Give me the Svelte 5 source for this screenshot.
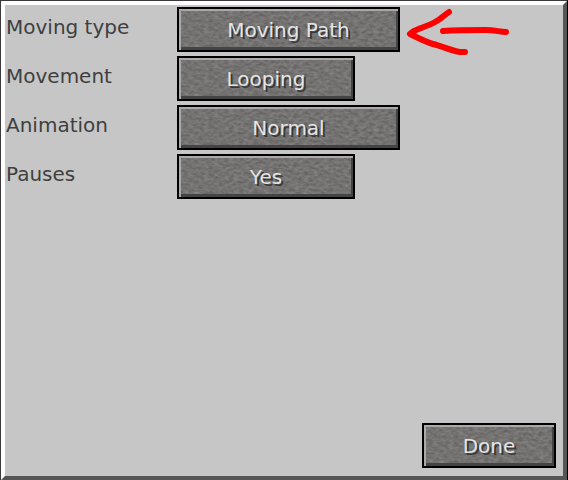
<script lang="ts">
  type Setting = {
    id: string;
    label: string;
    options: string[];
    wide: boolean;
    marked?: boolean;
  };

  const settings: Setting[] = [
    { id: 'moving-type', label: 'Moving type', options: ['Moving Path', 'Standing', 'Wandering'], wide: true, marked: true },
    { id: 'movement', label: 'Movement', options: ['Looping', 'Backtracking'], wide: false },
    { id: 'animation', label: 'Animation', options: ['Normal', 'Sneaking'], wide: true },
    { id: 'pauses', label: 'Pauses', options: ['Yes', 'No'], wide: false },
  ];

  let chosen = $state(settings.map(() => 0));
  let open = $state(true);

  function cycle(i: number) {
    chosen[i] = (chosen[i] + 1) % settings[i].options.length;
  }
</script>

{#if open}
  <main class="window">
    <div class="panel">
      <div class="settings">
        {#each settings as s, i (s.id)}
          <div class="row">
            <label for={s.id}>{s.label}</label>
            <button id={s.id} class="stone" class:wide={s.wide} type="button" onclick={() => cycle(i)}>
              {s.options[chosen[i]]}
            </button>
            {#if s.marked}
              <svg class="arrow" viewBox="0 0 104 46" aria-hidden="true">
                <path d="M45 5 C40 8 36 13 31 15 C24 19 16 21 10 24 L6 27 C14 31 22 35 29 37 C38 39 47 44 56 45 L61 45" />
                <path d="M39 24 C54 23 71 23 82 23 C91 23 96 25 102 25" />
              </svg>
            {/if}
          </div>
        {/each}
      </div>
      <button class="stone done" type="button" onclick={() => (open = false)}>Done</button>
    </div>
  </main>
{/if}

<style>
  :global(body) {
    margin: 0;
    background: #c6c6c6;
  }
  .window {
    box-sizing: border-box;
    display: flex;
    min-height: 100vh;
    border: 1px solid #3b393c;
    border-right-color: #000;
    border-bottom: 0;
    font-family: 'DejaVu Sans', sans-serif;
    font-size: 20px;
    line-height: 24px;
  }
  .panel {
    flex: 1;
    display: flex;
    flex-direction: column;
    border: 4px solid;
    border-color: #fff #555 #555 #fff;
    border-top-left-radius: 2px;
    background: #c6c6c6;
    padding: 2px 7px 8px 1px;
  }
  .settings {
    display: flex;
    flex-direction: column;
    gap: 4px;
  }
  .row {
    display: flex;
    align-items: flex-start;
  }
  label {
    flex: 0 0 171px;
    padding-top: 8px;
    color: #3f3f3f;
    white-space: nowrap;
  }
  .stone {
    box-sizing: border-box;
    flex-shrink: 0;
    width: 178px;
    height: 45px;
    margin: 0;
    padding: 0;
    border: 2px solid #000;
    border-radius: 0;
    background-color: #737070;
    background-image: url("data:image/svg+xml,%3Csvg xmlns='http://www.w3.org/2000/svg' width='240' height='48'%3E%3Cfilter id='n' x='0' y='0' width='100%25' height='100%25' color-interpolation-filters='sRGB'%3E%3CfeTurbulence type='fractalNoise' baseFrequency='.2 .36' numOctaves='3' seed='7'/%3E%3CfeColorMatrix values='.2 0 0 0 .358 .2 0 0 0 .348 .2 0 0 0 .346 0 0 0 0 1'/%3E%3C/filter%3E%3Crect width='240' height='48' filter='url(%23n)'/%3E%3C/svg%3E");
    box-shadow:
      inset 2px 2px #aaa8a9,
      inset -2px -3px #444;
    color: #e4e4e4;
    font: inherit;
    text-align: center;
    text-shadow: 2px 2px #383838;
    cursor: pointer;
  }
  .stone:hover {
    color: #ffffa0;
  }
  .stone.wide {
    width: 223px;
  }
  .stone.done {
    width: 134px;
    margin-top: auto;
    align-self: flex-end;
  }
  .arrow {
    flex: 0 0 104px;
    height: 46px;
    margin: 0 0 -1px 4px;
    overflow: visible;
    fill: none;
    stroke: #fe0000;
    stroke-width: 6;
    stroke-linecap: round;
    stroke-linejoin: round;
  }
</style>
